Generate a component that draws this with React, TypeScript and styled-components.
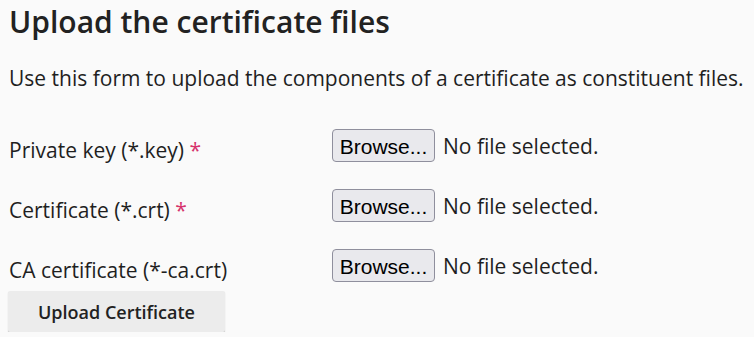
import React from "react";
import styled, { createGlobalStyle } from "styled-components";

const Global = createGlobalStyle`
  html, body { margin: 0; padding: 0; background: #fafafa; }
  body { font-family: "Open Sans", "Noto Sans", sans-serif; color: #1f1f1f; }
`;

const Page = styled.div`
  padding: 1px 8px 0 8px;
`;

const Title = styled.h2`
  margin: 0;
  font-size: 30px;
  font-weight: 600;
  line-height: 41px;
  color: #222;
  padding-left: 1px;
`;

const Intro = styled.p`
  margin: 22px 0 37px 0;
  font-size: 21px;
  line-height: 28px;
  padding-left: 1px;
`;

const Form = styled.form`
  display: flex;
  flex-direction: column;
  align-items: flex-start;
  gap: 25px;
`;

const Row = styled.div`
  display: grid;
  grid-template-columns: 324px auto;
  align-items: start;
  align-self: stretch;
`;

const Label = styled.label`
  font-size: 21px;
  line-height: 28px;
  padding-left: 1px;
  padding-top: 7px;
`;

const Req = styled.span`
  color: #d6336c;
`;

const FileField = styled.div`
  display: flex;
  align-items: baseline;
  gap: 8px;
`;

const BrowseButton = styled.button`
  box-sizing: border-box;
  width: 103px;
  height: 33px;
  padding: 2px 0 0 0;
  font-family: "Liberation Sans", Arial, sans-serif;
  font-size: 21px;
  color: #000;
  background: #e9e9ed;
  border: 1px solid #8f8f9d;
  border-radius: 4px;
`;

const FileStatus = styled.span`
  font-size: 21px;
  line-height: 28px;
  color: #1f1f1f;
`;

const Submit = styled.button`
  display: block;
  box-sizing: border-box;
  width: 217px;
  height: 41px;
  margin-top: -18px;
  font-family: "Open Sans", sans-serif;
  font-size: 18px;
  font-weight: 600;
  color: #222;
  background: #ececec;
  border: none;
  border-radius: 2px;
  box-shadow: 0 1px 1px rgba(0, 0, 0, 0.25);
`;

const fields = [
  { label: "Private key (*.key)", required: true },
  { label: "Certificate (*.crt)", required: true },
  { label: "CA certificate (*-ca.crt)", required: false },
];

export default function App() {
  return (
    <>
      <Global />
      <Page>
        <Title>Upload the certificate files</Title>
        <Intro>
          Use this form to upload the components of a certificate as constituent files.
        </Intro>
        <Form onSubmit={(e) => e.preventDefault()}>
          {fields.map((f) => (
            <Row key={f.label}>
              <Label>
                {f.label}
                {f.required && <Req> *</Req>}
              </Label>
              <FileField>
                <BrowseButton type="button">Browse...</BrowseButton>
                <FileStatus>No file selected.</FileStatus>
              </FileField>
            </Row>
          ))}
          <Submit type="submit">Upload Certificate</Submit>
        </Form>
      </Page>
    </>
  );
}
